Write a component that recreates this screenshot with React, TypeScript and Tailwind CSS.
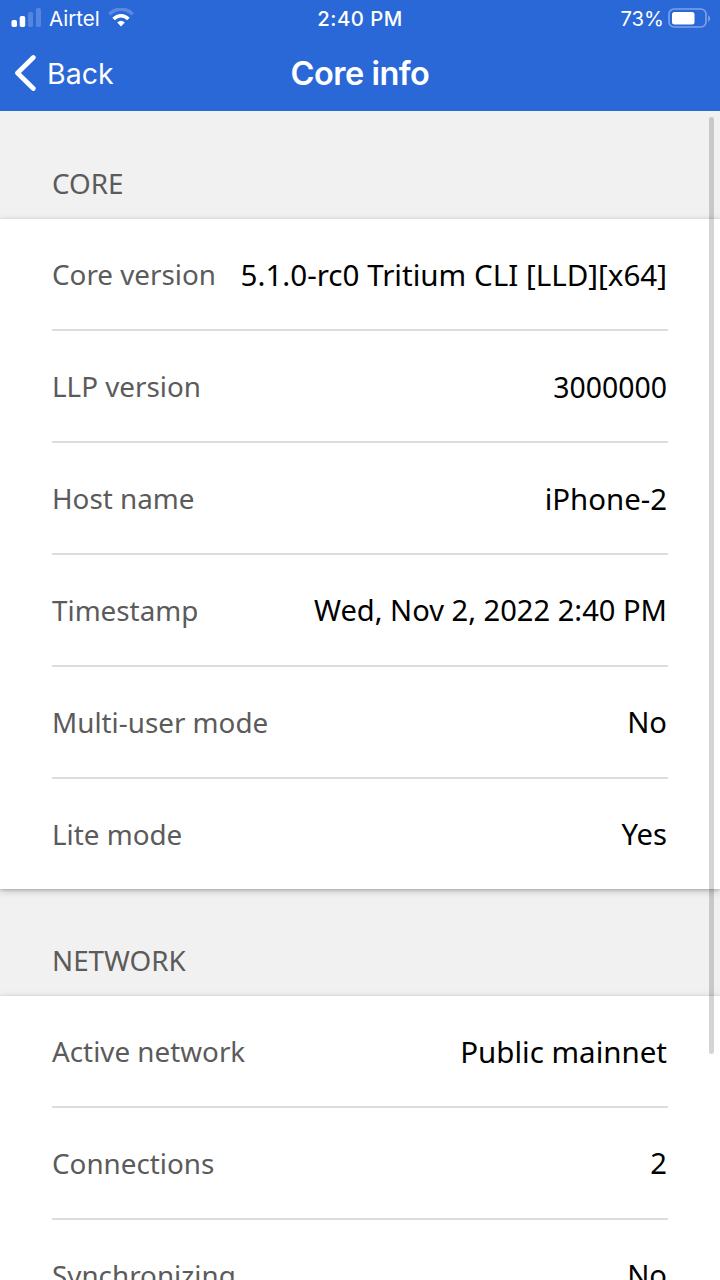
import React from "react";

type RowProps = { label: string; value: string; valueClass: string; last?: boolean };

function Row({ label, value, valueClass, last }: RowProps) {
  return (
    <div className={last ? "flex h-[110px] items-center justify-between pt-[1px]" : "flex h-[112px] items-center justify-between border-b-2 border-[#dcdcdc] pt-[2px]"}>
      <span className="text-[27.8px] text-[#5b5b5b]">{label}</span>
      <span className={`whitespace-nowrap pr-px text-black ${valueClass}`}>{value}</span>
    </div>
  );
}

function SectionTitle({ children }: { children: React.ReactNode }) {
  return <h2 className="flex h-[107px] items-end pr-[53px] pb-[17px] pl-[52px] text-[27.8px] leading-[37px] text-[#5b5b5b]">{children}</h2>;
}

export default function App() {
  return (
    <div className="relative h-[1280px] w-[720px] overflow-hidden bg-[#f1f1f1] font-['Noto_Sans',sans-serif]">
      <header className="h-[111px] bg-[#2a67d7] font-['Inter',sans-serif] text-white">
        <div className="grid h-[37px] grid-cols-3 items-center pr-[9px] pl-[11px] text-[20px]">
          <div className="flex items-center">
            <svg className="-mt-[2px]" width="31" height="20" viewBox="0 0 31 20" fill="white">
              <rect x=".5" y="12" width="5.5" height="7" rx="1.7" />
              <rect x="8.7" y="8" width="5.5" height="11" rx="1.7" />
              <rect x="17" y="4" width="5" height="15" rx="1.7" opacity=".2" />
              <rect x="25" y="0" width="5" height="19" rx="1.7" opacity=".2" />
            </svg>
            <span className="ml-[7px] pt-[2px] text-[20.5px]">Airtel</span>
            <svg className="-mt-[2px] ml-[8px]" width="26" height="20" viewBox="0 0 26 20" fill="none" stroke="white" strokeWidth="3.6">
              <path d="M1.3 6.2C8-.5 18-.5 24.7 6.2" opacity=".22" />
              <path d="M5.6 11C9.8 6.6 16.2 6.6 20.4 11" />
              <path d="M9.2 14.5Q13 11 16.8 14.5L13 18.5Z" fill="white" stroke="none" />
            </svg>
          </div>
          <span className="pt-[2px] pr-[2px] text-center text-[20.3px] font-medium tracking-[0.5px]">2:40 PM</span>
          <div className="flex items-center justify-end gap-[4px]">
            <span className="pt-[2px] text-[20.3px]">73%</span>
            <svg className="-mt-[2px]" width="43" height="20" viewBox="0 0 43 20" fill="none">
              <rect x="1" y="1" width="37" height="18" rx="5" stroke="white" strokeOpacity=".4" strokeWidth="1.6" />
              <rect x="4" y="4" width="22.5" height="12.5" rx="2.5" fill="white" />
              <path d="M40.2 7q4 3.5 0 7Z" fill="white" fillOpacity=".4" />
            </svg>
          </div>
        </div>
        <div className="grid h-[74px] grid-cols-3 items-center px-[14px]">
          <div className="flex items-center gap-[11px] text-[28.5px]">
            <svg className="-mt-[2px]" width="22" height="36" viewBox="0 0 22 36" fill="none" stroke="white" strokeWidth="4.7" strokeLinecap="round" strokeLinejoin="round"><path d="M19.3 2.5L3.5 18l15.8 15.5" /></svg>
            Back
          </div>
          <h1 className="text-center text-[32.5px] font-semibold tracking-[-0.5px]">Core info</h1>
        </div>
      </header>
      <main className="pt-px">
        <SectionTitle>CORE</SectionTitle>
        <section className="bg-white px-[52px] shadow-[0_2px_8px_rgba(0,0,0,0.2),0_1px_3px_rgba(0,0,0,0.18)]">
          <Row label="Core version" value="5.1.0-rc0 Tritium CLI [LLD][x64]" valueClass="text-[29.6px]" />
          <Row label="LLP version" value="3000000" valueClass="text-[28.4px]" />
          <Row label="Host name" value="iPhone-2" valueClass="text-[29.4px]" />
          <Row label="Timestamp" value="Wed, Nov 2, 2022 2:40 PM" valueClass="text-[29.1px]" />
          <Row label="Multi-user mode" value="No" valueClass="text-[29.2px]" />
          <Row label="Lite mode" value="Yes" valueClass="text-[29.2px]" last />
        </section>
        <SectionTitle>NETWORK</SectionTitle>
        <section className="bg-white px-[52px] shadow-[0_2px_8px_rgba(0,0,0,0.2),0_1px_3px_rgba(0,0,0,0.18)]">
          <Row label="Active network" value="Public mainnet" valueClass="text-[29.5px]" />
          <Row label="Connections" value="2" valueClass="text-[29.2px]" />
          <Row label="Synchronizing" value="No" valueClass="text-[29.2px]" last />
        </section>
      </main>
      <div className="absolute top-[117px] right-[6px] h-[937px] w-[5px] rounded-full bg-black/17" />
    </div>
  );
}
